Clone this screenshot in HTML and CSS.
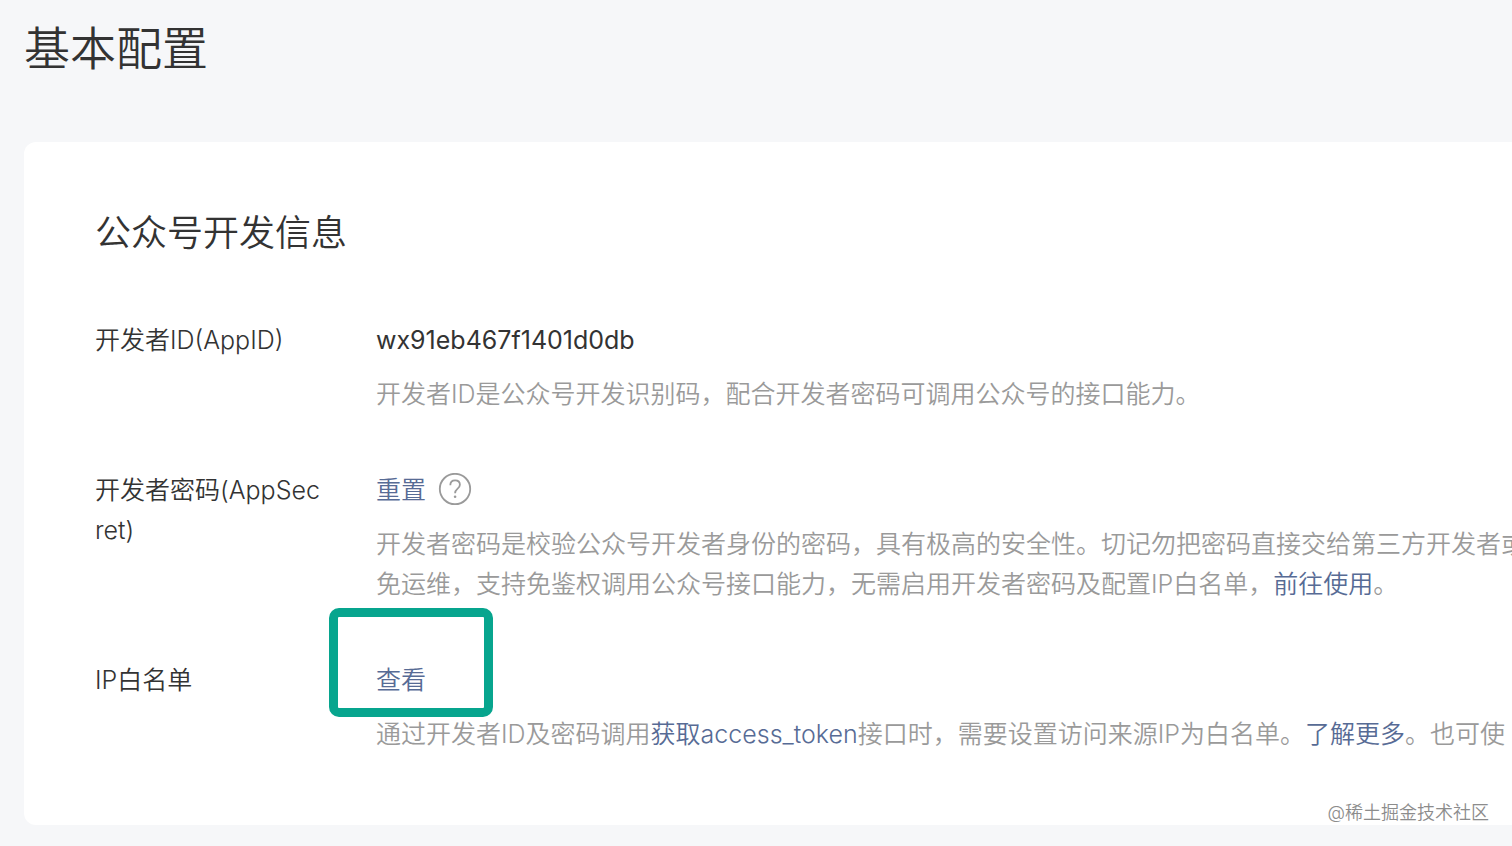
FILE: index.html
```html
<!DOCTYPE html>
<html lang="zh-CN">
<head>
<meta charset="utf-8">
<title>基本配置</title>
<link rel="stylesheet" href="styles.css">
</head>
<body>
<main class="page">
  <h1 class="page-title">基本配置</h1>
  <section class="card">
    <h2 class="card-title">公众号开发信息</h2>
    <dl class="fields">
      <div class="field">
        <dt class="label">开发者ID(AppID)</dt>
        <dd class="content">
          <div class="value app-id">wx91eb467f1401d0db</div>
          <p class="hint">开发者ID是公众号开发识别码，配合开发者密码可调用公众号的接口能力。</p>
        </dd>
      </div>
      <div class="field">
        <dt class="label">开发者密码(AppSecret)</dt>
        <dd class="content">
          <div class="value">
            <a class="link" href="#">重置</a>
            <button class="help" type="button" aria-label="帮助">
              <svg class="help-icon" viewBox="0 0 34 34" fill="none" stroke="currentColor" stroke-width="1.8">
                <circle cx="17" cy="16" r="15.2"/>
                <path d="M12.3 12.2c0-2.9 1.9-4.8 4.8-4.8s4.8 1.8 4.8 4.4c0 1.9-1 2.9-2.5 4.1-1.5 1.2-2.3 2.1-2.3 4.4"/>
                <circle cx="17.1" cy="23.8" r="1.3" fill="currentColor" stroke="none"/>
              </svg>
            </button>
          </div>
          <p class="hint">开发者密码是校验公众号开发者身份的密码，具有极高的安全性。切记勿把密码直接交给第三方开发者或<br>免运维，支持免鉴权调用公众号接口能力，无需启用开发者密码及配置IP白名单，<a class="link" href="#">前往使用</a>。</p>
        </dd>
      </div>
      <div class="field">
        <dt class="label">IP白名单</dt>
        <dd class="content">
          <div class="value marked"><a class="link" href="#">查看</a></div>
          <p class="hint">通过开发者ID及密码调用<a class="link" href="#">获取access_token</a>接口时，需要设置访问来源IP为白名单。<a class="link" href="#">了解更多</a>。也可使</p>
        </dd>
      </div>
    </dl>
  </section>
  <div class="watermark">@稀土掘金技术社区</div>
</main>
</body>
</html>
```
FILE: styles.css
```css
* {
  box-sizing: border-box;
}

body {
  margin: 0;
  background: #f6f7f9;
  color: #333;
  font: 350 25px/40px Inter, "Noto Sans CJK SC", sans-serif;
}

.page {
  position: relative;
  min-height: 100vh;
  padding: 18px 0 20px 24px;
  overflow: hidden;
}

.page-title {
  margin: 0 0 64px;
  font-size: 46px;
  font-weight: 350;
  line-height: 60px;
}

.card {
  padding: 71px 0 71px 71px;
  border-radius: 12px 0 0 12px;
  background: #fff;
}

.card-title {
  margin: 0 0 67px;
  font-size: 36px;
  font-weight: 350;
  line-height: 40px;
}

.fields {
  display: grid;
  gap: 56px;
  margin: 0;
}

.field {
  display: grid;
  grid-template-columns: 228px 1fr;
  column-gap: 53px;
}

.label {
  word-break: break-all;
}

.content {
  min-width: 0;
  margin: 0;
}

.value {
  display: flex;
  align-items: center;
  gap: 12px;
}

.app-id {
  font-weight: 400;
}

.hint {
  margin: 14px 0 0;
  color: #9a9a9a;
  white-space: nowrap;
}

.link {
  color: #576b95;
  text-decoration: none;
}

.help {
  display: flex;
  padding: 0;
  border: 0;
  background: none;
  color: #9a9a9a;
}

.help-icon {
  width: 34px;
  height: 34px;
}

.marked {
  position: relative;
}

.marked::after {
  content: "";
  position: absolute;
  box-sizing: border-box;
  top: -52px;
  left: -47px;
  width: 164px;
  height: 109px;
  border: 9px solid #07a58e;
  border-radius: 10px;
  pointer-events: none;
}

.watermark {
  position: absolute;
  right: 23px;
  bottom: 21px;
  color: #8c8c8c;
  font-size: 18px;
  line-height: 24px;
  text-shadow: 1px 1px 1px #fff;
}
```
